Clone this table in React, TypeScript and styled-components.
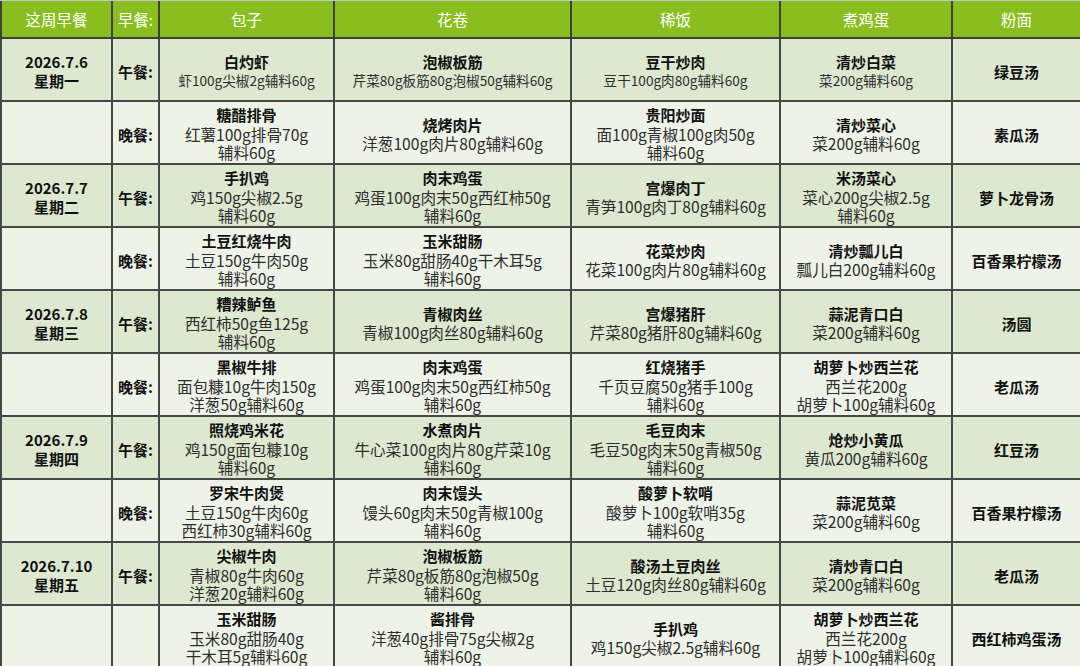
import React from "react";
import styled, { createGlobalStyle } from "styled-components";

const Global = createGlobalStyle`
  html, body { margin: 0; padding: 0; background: #ffffff; }
  body { font-family: "Noto Sans CJK SC", "Noto Sans", sans-serif; }
`;

const Page = styled.div`
  width: 1080px;
  height: 666px;
  overflow: hidden;
  border-top: 1px solid #c4c4c4;
  box-sizing: border-box;
`;

const Table = styled.table`
  width: 1080px;
  border-collapse: collapse;
  table-layout: fixed;
`;

const HeadCell = styled.th`
  height: 36px;
  padding: 0;
  background: #8abe1e;
  color: #ffffff;
  font-size: 15.5px;
  font-weight: 400;
  text-align: center;
  vertical-align: middle;
  border: 2px solid #3f3f3f;
  border-top: none;
`;

const Row = styled.tr<{ $odd: boolean }>`
  height: 63px;
  background: ${(p) => (p.$odd ? "#dce8cf" : "#eef3e7")};
`;

const Cell = styled.td`
  padding: 3px 0 0;
  text-align: center;
  vertical-align: middle;
  border: 2px solid #474747;
  white-space: nowrap;
  overflow: hidden;
`;

const DateText = styled.div`
  font-size: 15px;
  font-weight: 700;
  line-height: 19px;
  color: #111111;
`;

const MealLabel = styled.div`
  font-size: 15px;
  font-weight: 700;
  color: #111111;
`;

const DishTitle = styled.div`
  font-size: 15px;
  font-weight: 700;
  line-height: 18.5px;
  color: #111111;
`;

const DishLine = styled.div<{ $small: boolean }>`
  font-size: ${(p) => (p.$small ? "13.6px" : "15.6px")};
  font-weight: 400;
  line-height: 18.5px;
  color: #2e2e2e;
`;

const Soup = styled.div`
  font-size: 15px;
  font-weight: 700;
  color: #111111;
`;

type Dish = string[];
type RowData = {
  date?: string[];
  meal: string;
  small?: boolean;
  dishes: Dish[];
  soup: string;
};

const rows: RowData[] = [
  {
    date: ["2026.7.6", "星期一"],
    meal: "午餐:",
    small: true,
    dishes: [
      ["白灼虾", "虾100g尖椒2g辅料60g"],
      ["泡椒板筋", "芹菜80g板筋80g泡椒50g辅料60g"],
      ["豆干炒肉", "豆干100g肉80g辅料60g"],
      ["清炒白菜", "菜200g辅料60g"],
    ],
    soup: "绿豆汤",
  },
  {
    meal: "晚餐:",
    dishes: [
      ["糖醋排骨", "红薯100g排骨70g", "辅料60g"],
      ["烧烤肉片", "洋葱100g肉片80g辅料60g"],
      ["贵阳炒面", "面100g青椒100g肉50g", "辅料60g"],
      ["清炒菜心", "菜200g辅料60g"],
    ],
    soup: "素瓜汤",
  },
  {
    date: ["2026.7.7", "星期二"],
    meal: "午餐:",
    dishes: [
      ["手扒鸡", "鸡150g尖椒2.5g", "辅料60g"],
      ["肉末鸡蛋", "鸡蛋100g肉末50g西红柿50g", "辅料60g"],
      ["宫爆肉丁", "青笋100g肉丁80g辅料60g"],
      ["米汤菜心", "菜心200g尖椒2.5g", "辅料60g"],
    ],
    soup: "萝卜龙骨汤",
  },
  {
    meal: "晚餐:",
    dishes: [
      ["土豆红烧牛肉", "土豆150g牛肉50g", "辅料60g"],
      ["玉米甜肠", "玉米80g甜肠40g干木耳5g", "辅料60g"],
      ["花菜炒肉", "花菜100g肉片80g辅料60g"],
      ["清炒瓢儿白", "瓢儿白200g辅料60g"],
    ],
    soup: "百香果柠檬汤",
  },
  {
    date: ["2026.7.8", "星期三"],
    meal: "午餐:",
    dishes: [
      ["糟辣鲈鱼", "西红柿50g鱼125g", "辅料60g"],
      ["青椒肉丝", "青椒100g肉丝80g辅料60g"],
      ["宫爆猪肝", "芹菜80g猪肝80g辅料60g"],
      ["蒜泥青口白", "菜200g辅料60g"],
    ],
    soup: "汤圆",
  },
  {
    meal: "晚餐:",
    dishes: [
      ["黑椒牛排", "面包糠10g牛肉150g", "洋葱50g辅料60g"],
      ["肉末鸡蛋", "鸡蛋100g肉末50g西红柿50g", "辅料60g"],
      ["红烧猪手", "千页豆腐50g猪手100g", "辅料60g"],
      ["胡萝卜炒西兰花", "西兰花200g", "胡萝卜100g辅料60g"],
    ],
    soup: "老瓜汤",
  },
  {
    date: ["2026.7.9", "星期四"],
    meal: "午餐:",
    dishes: [
      ["照烧鸡米花", "鸡150g面包糠10g", "辅料60g"],
      ["水煮肉片", "牛心菜100g肉片80g芹菜10g", "辅料60g"],
      ["毛豆肉末", "毛豆50g肉末50g青椒50g", "辅料60g"],
      ["炝炒小黄瓜", "黄瓜200g辅料60g"],
    ],
    soup: "红豆汤",
  },
  {
    meal: "晚餐:",
    dishes: [
      ["罗宋牛肉煲", "土豆150g牛肉60g", "西红柿30g辅料60g"],
      ["肉末馒头", "馒头60g肉末50g青椒100g", "辅料60g"],
      ["酸萝卜软哨", "酸萝卜100g软哨35g", "辅料60g"],
      ["蒜泥苋菜", "菜200g辅料60g"],
    ],
    soup: "百香果柠檬汤",
  },
  {
    date: ["2026.7.10", "星期五"],
    meal: "午餐:",
    dishes: [
      ["尖椒牛肉", "青椒80g牛肉60g", "洋葱20g辅料60g"],
      ["泡椒板筋", "芹菜80g板筋80g泡椒50g", "辅料60g"],
      ["酸汤土豆肉丝", "土豆120g肉丝80g辅料60g"],
      ["清炒青口白", "菜200g辅料60g"],
    ],
    soup: "老瓜汤",
  },
  {
    meal: "",
    dishes: [
      ["玉米甜肠", "玉米80g甜肠40g", "干木耳5g辅料60g"],
      ["酱排骨", "洋葱40g排骨75g尖椒2g", "辅料60g"],
      ["手扒鸡", "鸡150g尖椒2.5g辅料60g"],
      ["胡萝卜炒西兰花", "西兰花200g", "胡萝卜100g辅料60g"],
    ],
    soup: "西红柿鸡蛋汤",
  },
];

const headers = ["这周早餐", "早餐:", "包子", "花卷", "稀饭", "煮鸡蛋", "粉面"];
const widths = [111, 47, 175, 237, 209, 172, 129];

export default function App() {
  return (
    <>
      <Global />
      <Page>
        <Table>
          <colgroup>
            {widths.map((w, i) => (
              <col key={i} style={{ width: w }} />
            ))}
          </colgroup>
          <thead>
            <tr>
              {headers.map((h) => (
                <HeadCell key={h}>{h}</HeadCell>
              ))}
            </tr>
          </thead>
          <tbody>
            {rows.map((r, i) => (
              <Row key={i} $odd={i % 2 === 0}>
                <Cell>
                  {r.date?.map((d) => (
                    <DateText key={d}>{d}</DateText>
                  ))}
                </Cell>
                <Cell>
                  <MealLabel>{r.meal}</MealLabel>
                </Cell>
                {r.dishes.map((dish, j) => (
                  <Cell key={j}>
                    <DishTitle>{dish[0]}</DishTitle>
                    {dish.slice(1).map((line, k) => (
                      <DishLine key={k} $small={!!r.small}>
                        {line}
                      </DishLine>
                    ))}
                  </Cell>
                ))}
                <Cell>
                  <Soup>{r.soup}</Soup>
                </Cell>
              </Row>
            ))}
          </tbody>
        </Table>
      </Page>
    </>
  );
}
